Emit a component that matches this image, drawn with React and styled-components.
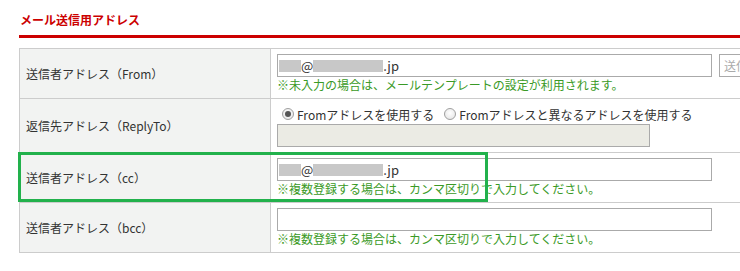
import React from 'react'
import styled, { createGlobalStyle } from 'styled-components'

const GlobalStyle = createGlobalStyle`
  html, body {
    margin: 0;
    padding: 0;
    background: #fff;
    overflow: hidden;
  }
  body {
    font-family: "Noto Sans CJK JP", "Noto Sans", sans-serif;
    color: #333;
  }
`

const rows = [
  { label: '送信者アドレス（From）', kind: 'from', value: true, note: '※未入力の場合は、メールテンプレートの設定が利用されます。' },
  { label: '返信先アドレス（ReplyTo）', kind: 'reply' },
  { label: '送信者アドレス（cc）', kind: 'mail', value: true, note: '※複数登録する場合は、カンマ区切りで入力してください。' },
  { label: '送信者アドレス（bcc）', kind: 'mail', value: false, note: '※複数登録する場合は、カンマ区切りで入力してください。' },
]

function Address() {
  return (
    <Value>
      <Redact $w={22} />@<Redact $w={70} />.jp
    </Value>
  )
}

function Cell({ row }) {
  if (row.kind === 'reply') {
    return (
      <>
        <RadioLine>
          <Radio $checked />
          <RadioText>Fromアドレスを使用する</RadioText>
          <Radio />
          <RadioText>Fromアドレスと異なるアドレスを使用する</RadioText>
        </RadioLine>
        <Field $w={373} $disabled />
      </>
    )
  }
  return (
    <>
      <FieldRow>
        <Field $w={435}>{row.value && <Address />}</Field>
        {row.kind === 'from' && <Field $w={60}><Placeholder>送信者名</Placeholder></Field>}
      </FieldRow>
      <Note>{row.note}</Note>
    </>
  )
}

export default function App() {
  return (
    <>
      <GlobalStyle />
      <Section>
        <Title>メール送信用アドレス</Title>
        <TableWrap>
          <Table>
            <tbody>
              {rows.map((row, i) => (
                <tr key={i}>
                  <Label>{row.label}</Label>
                  <Content>
                    <Cell row={row} />
                  </Content>
                </tr>
              ))}
            </tbody>
          </Table>
          <Highlight />
        </TableWrap>
      </Section>
    </>
  )
}

const Section = styled.div`
  padding: 12px 0 0 19px;
  width: 760px;
`

const Title = styled.div`
  font-size: 12px;
  font-weight: bold;
  line-height: 16px;
  color: #cc0000;
  padding: 0 0 7px 1px;
  border-bottom: 3px solid #cc0000;
  margin-bottom: 10px;
`

const TableWrap = styled.div`
  position: relative;
`

const Table = styled.table`
  border-collapse: collapse;
  width: 780px;
  font-size: 12px;
`

const Label = styled.th`
  width: 244px;
  text-align: left;
  font-weight: normal;
  background: #f2f3f2;
  border: 1px solid #cccccc;
  padding: 0 0 0 6px;
  color: #333;
  vertical-align: middle;
`

const Content = styled.td`
  border: 1px solid #cccccc;
  padding: 5px 6px 5px 6px;
  vertical-align: top;
`

const FieldRow = styled.div`
  display: flex;
  gap: 7px;
`

const Field = styled.div`
  box-sizing: border-box;
  width: ${p => p.$w}px;
  height: 23px;
  border: 1px solid #aaaaaa;
  background: ${p => (p.$disabled ? '#ebebe4' : '#fff')};
  display: flex;
  align-items: center;
  padding: 0 1px;
  overflow: hidden;
  white-space: nowrap;
`

const Value = styled.span`
  display: flex;
  align-items: center;
  font-size: 13px;
  color: #333;
`

const Redact = styled.span`
  display: inline-block;
  width: ${p => p.$w}px;
  height: 12px;
  background: #c8c8c8;
`

const Placeholder = styled.span`
  font-size: 12px;
  color: #aaaaaa;
  padding-left: 3px;
`

const Note = styled.div`
  color: #3a9a26;
  line-height: 16px;
  margin-top: 0;
`

const RadioLine = styled.div`
  display: flex;
  align-items: center;
  height: 18px;
  margin: 1px 0 1px;
`

const Radio = styled.span`
  box-sizing: border-box;
  width: 12px;
  height: 12px;
  border-radius: 50%;
  border: 1px solid #a0a0a0;
  background: radial-gradient(circle at 50% 40%, #ffffff 0%, #e2e2e2 100%);
  margin: 0 3px 0 5px;
  position: relative;
  &::after {
    content: '';
    display: ${p => (p.$checked ? 'block' : 'none')};
    position: absolute;
    left: 2px;
    top: 2px;
    width: 6px;
    height: 6px;
    border-radius: 50%;
    background: #555;
  }
`

const RadioText = styled.span`
  color: #333;
  font-size: 12px;
  margin-right: 5px;
`

const Highlight = styled.div`
  position: absolute;
  left: -1px;
  top: 104px;
  width: 470px;
  height: 50px;
  box-sizing: border-box;
  border: 3px solid #22b14c;
  pointer-events: none;
`
